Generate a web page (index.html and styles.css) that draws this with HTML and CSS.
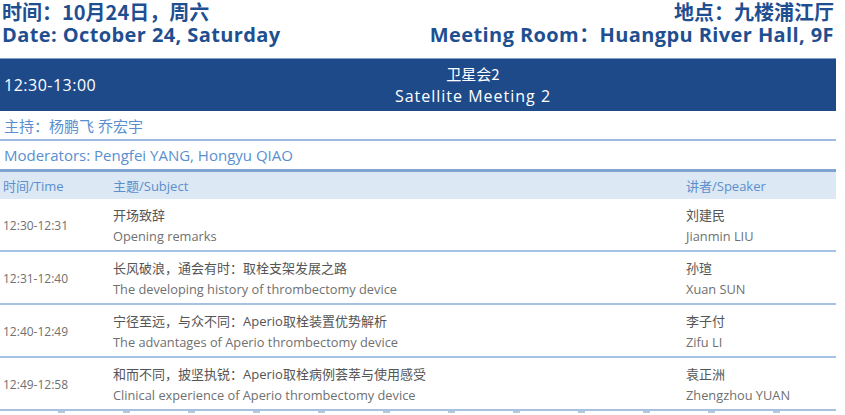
FILE: index.html
```html
<!DOCTYPE html>
<html lang="zh">
<head>
<meta charset="utf-8">
<link rel="stylesheet" href="styles.css">
</head>
<body>
<div class="page">
  <header class="top">
    <div class="top-left">
      <div class="zh-line">时间：10月24日，周六</div>
      <div class="en-line">Date: October 24, Saturday</div>
    </div>
    <div class="top-right">
      <div class="zh-line">地点：九楼浦江厅</div>
      <div class="en-line">Meeting Room：Huangpu River Hall, 9F</div>
    </div>
  </header>
  <table class="agenda">
    <colgroup>
      <col class="c-time">
      <col class="c-subj">
      <col class="c-spk">
    </colgroup>
    <tr class="banner">
      <td class="banner-time">12:30-13:00</td>
      <td class="banner-title" colspan="2">
        <div class="bt-zh">卫星会2</div>
        <div class="bt-en">Satellite Meeting 2</div>
      </td>
    </tr>
    <tr class="mod mod-zh"><td colspan="3">主持：杨鹏飞 乔宏宇</td></tr>
    <tr class="mod mod-en"><td colspan="3">Moderators: Pengfei YANG, Hongyu QIAO</td></tr>
    <tr class="head">
      <td>时间/Time</td>
      <td>主题/Subject</td>
      <td>讲者/Speaker</td>
    </tr>
    <tr class="item">
      <td class="time">12:30-12:31</td>
      <td><div class="zh">开场致辞</div><div class="en">Opening remarks</div></td>
      <td><div class="zh">刘建民</div><div class="en">Jianmin LIU</div></td>
    </tr>
    <tr class="item">
      <td class="time">12:31-12:40</td>
      <td><div class="zh">长风破浪，通会有时：取栓支架发展之路</div><div class="en">The developing history of thrombectomy device</div></td>
      <td><div class="zh">孙瑄</div><div class="en">Xuan SUN</div></td>
    </tr>
    <tr class="item">
      <td class="time">12:40-12:49</td>
      <td><div class="zh">宁径至远，与众不同：Aperio取栓装置优势解析</div><div class="en">The advantages of Aperio thrombectomy device</div></td>
      <td><div class="zh">李子付</div><div class="en">Zifu LI</div></td>
    </tr>
    <tr class="item last">
      <td class="time">12:49-12:58</td>
      <td><div class="zh">和而不同，披坚执锐：Aperio取栓病例荟萃与使用感受</div><div class="en">Clinical experience of Aperio thrombectomy device</div></td>
      <td><div class="zh">袁正洲</div><div class="en">Zhengzhou YUAN</div></td>
    </tr>
  </table>
  <div class="ticks"></div>
</div>
</body>
</html>
```
FILE: styles.css
```css
html, body {
  margin: 0;
  padding: 0;
  background: #ffffff;
}
.page {
  width: 845px;
  height: 415px;
  overflow: hidden;
  font-family: "Open Sans", "Noto Sans CJK SC", sans-serif;
}
.top {
  display: flex;
  justify-content: space-between;
  width: 836px;
  padding: 1px 0 0 2px;
  box-sizing: border-box;
  border-bottom: 1px solid #7f9ccb;
  height: 59px;
  color: #1f4f91;
  font-weight: 700;
}
.top-right {
  text-align: right;
  padding-right: 2px;
}
.top .zh-line {
  font-size: 20px;
  line-height: 22px;
  font-family: "Noto Sans CJK SC", sans-serif;
}
.top .en-line {
  font-size: 20px;
  line-height: 24px;
  letter-spacing: 0.4px;
  font-family: "Open Sans", "Noto Sans CJK SC", sans-serif;
}
.agenda {
  width: 836px;
  border-collapse: collapse;
  table-layout: fixed;
}
.c-time { width: 110px; }
.c-subj { width: 573px; }
.c-spk { width: 153px; }
.agenda td {
  padding: 0;
  vertical-align: middle;
}
.banner td {
  background: #1e4a8a;
  color: #ffffff;
  height: 52px;
}
.banner-time {
  font-size: 16px;
  letter-spacing: 0.5px;
  padding-left: 4px !important;
}
.banner-title {
  text-align: center;
}
.bt-zh {
  font-size: 15px;
  line-height: 23px;
  font-family: "Noto Sans CJK SC", sans-serif;
}
.bt-en {
  font-size: 16px;
  line-height: 23px;
  letter-spacing: 1px;
}
.mod td {
  color: #5a8fcf;
  font-size: 15px;
  padding-left: 4px !important;
}
.mod-zh td {
  height: 28px;
  border-bottom: 2px solid #9dbbe0;
}
.mod-en td {
  height: 28px;
  border-bottom: 3px solid #7fa4d2;
}
.head td {
  background: #dce8f4;
  color: #5a8fcc;
  font-size: 13px;
  height: 27px;
  padding-left: 3px;
}
.item td {
  height: 49px;
  border-bottom: 2px solid #a7c1e2;
  color: #6a6a6a;
  padding-left: 3px;
  padding-top: 2px;
}
.item td.time {
  font-size: 12px;
  color: #707070;
}
.item .zh {
  font-size: 13px;
  line-height: 21px;
  font-family: "Open Sans", "Noto Sans CJK SC", sans-serif;
  color: #555555;
}
.item .en {
  font-size: 12.8px;
  line-height: 21px;
  color: #707070;
}
.ticks {
  width: 836px;
  height: 3px;
  background: repeating-linear-gradient(90deg, transparent 0 58px, #b8c8dc 58px 66px, transparent 66px 65px);
  background-size: 65px 2px;
  background-repeat: repeat-x;
}
```
